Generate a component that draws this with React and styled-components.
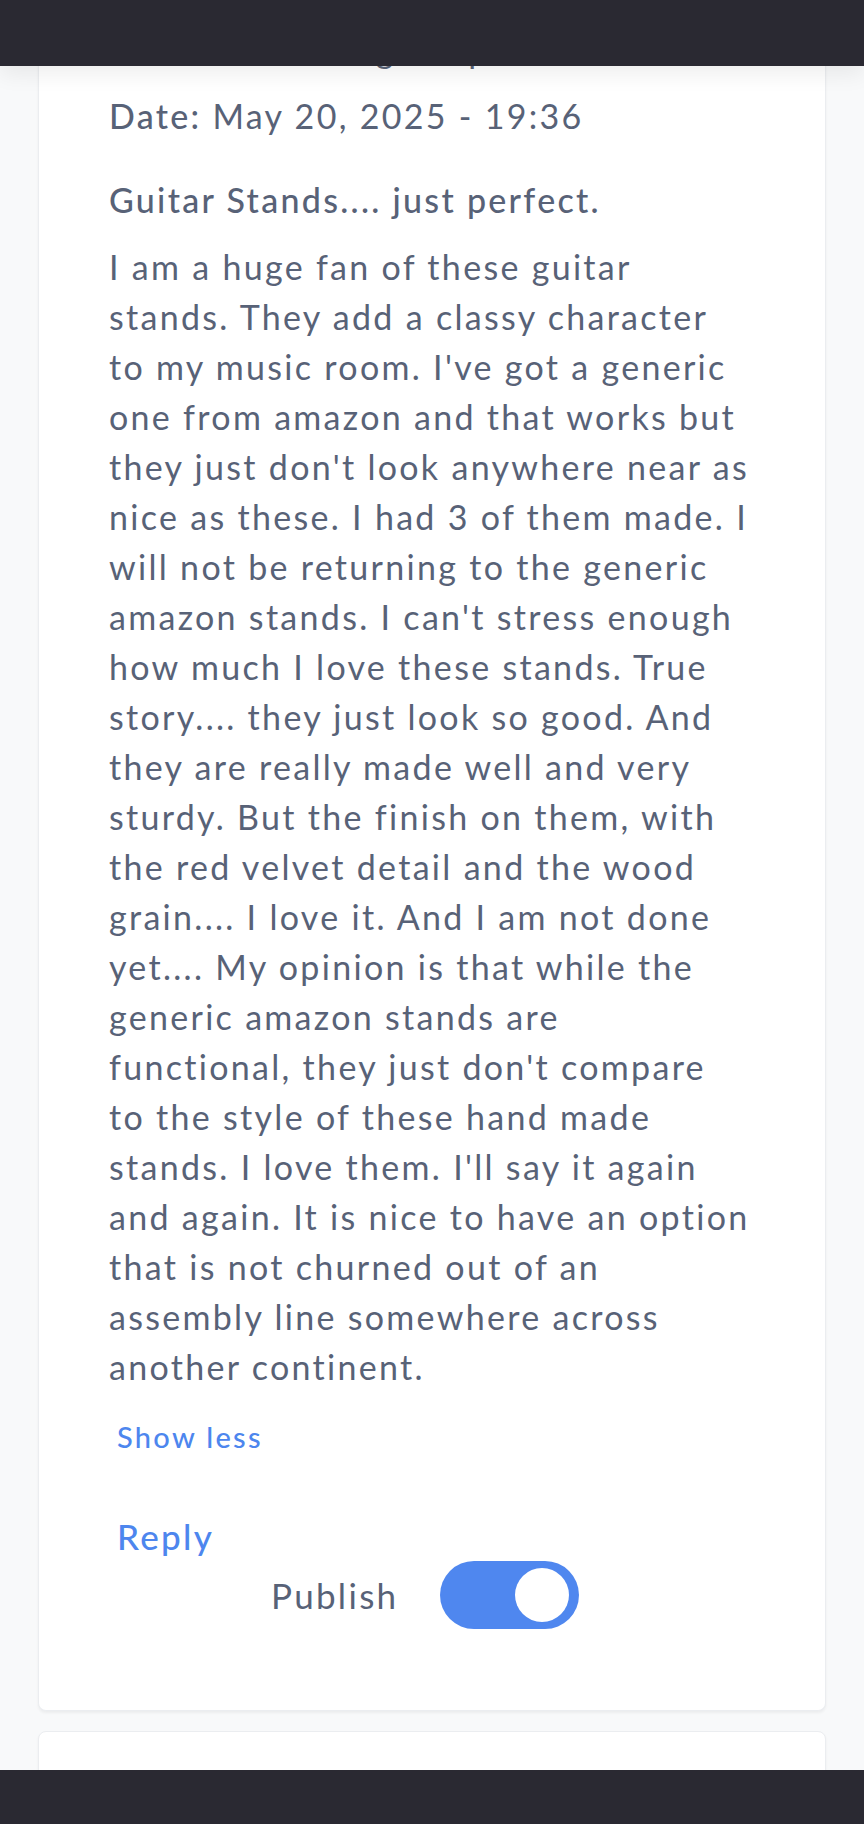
import React from 'react';
import styled, { createGlobalStyle } from 'styled-components';

const GlobalStyle = createGlobalStyle`
  html, body {
    margin: 0;
    padding: 0;
    background: #f8f9fa;
    font-family: 'Lato', 'Noto Sans', sans-serif;
  }
`;

const TopBar = styled.div`
  position: fixed;
  top: 0;
  left: 0;
  right: 0;
  height: 66px;
  background: #2a2932;
  box-shadow: 0 8px 22px rgba(0, 0, 0, 0.07);
  z-index: 10;
`;

const BottomBar = styled.div`
  position: fixed;
  bottom: 0;
  left: 0;
  right: 0;
  height: 54px;
  background: #2a2932;
  z-index: 10;
`;

const Page = styled.div`
  display: flex;
  flex-direction: column;
  gap: 20px;
  padding: 0 38px;
  height: 1824px;
  overflow: hidden;
`;

const Card = styled.div`
  background: #ffffff;
  border: 1px solid #ebedf0;
  border-top: none;
  border-radius: 0 0 8px 8px;
  box-shadow: 0 2px 3px rgba(0, 0, 0, 0.05);
  padding: 25px 40px 81px 70px;
  flex: ${p => (p.grow ? 1 : 'none')};
  letter-spacing: 2.3px;
  ${p => p.next && 'border-top: 1px solid #ebedf0; border-radius: 8px 8px 0 0;'}
`;

const Line = styled.div`
  font-size: 34px;
  line-height: 50px;
  color: #586277;
  margin-top: ${p => p.mt || 0}px;
  font-weight: ${p => p.weight || 400};
  white-space: nowrap;
`;

const Label = styled.span`
  font-weight: 500;
`;

const Body = styled.div`
  font-size: 34px;
  line-height: 50px;
  color: #586277;
  margin-top: 17px;
  white-space: pre;
`;

const LinkButton = styled.button`
  display: block;
  border: none;
  background: none;
  padding: 0;
  margin: ${p => p.mt}px 0 0 8px;
  font-family: inherit;
  letter-spacing: inherit;
  font-size: ${p => p.size}px;
  line-height: ${p => p.lh}px;
  font-weight: 500;
  color: #4d86ee;
  cursor: pointer;
`;

const PublishRow = styled.div`
  display: flex;
  align-items: center;
  gap: 42px;
  padding-left: 162px;
  height: 68px;
`;

const PublishLabel = styled.span`
  font-size: 35px;
  color: #586277;
`;

const Toggle = styled.div`
  width: 139px;
  height: 68px;
  border-radius: 34px;
  background: #4f87ef;
  position: relative;
`;

const Knob = styled.div`
  position: absolute;
  top: 7px;
  right: 10px;
  width: 54px;
  height: 54px;
  border-radius: 50%;
  background: #ffffff;
`;

const review = `I am a huge fan of these guitar
stands. They add a classy character
to my music room. I've got a generic
one from amazon and that works but
they just don't look anywhere near as
nice as these. I had 3 of them made. I
will not be returning to the generic
amazon stands. I can't stress enough
how much I love these stands. True
story.... they just look so good. And
they are really made well and very
sturdy. But the finish on them, with
the red velvet detail and the wood
grain.... I love it. And I am not done
yet.... My opinion is that while the
generic amazon stands are
functional, they just don't compare
to the style of these hand made
stands. I love them. I'll say it again
and again. It is nice to have an option
that is not churned out of an
assembly line somewhere across
another continent.`;

export default function App() {
  return (
    <>
      <GlobalStyle />
      <TopBar />
      <Page>
        <Card>
          <Line>Submitted: Doug Harp</Line>
          <Line mt={16}>
            <Label>Date:</Label> May 20, 2025 - 19:36
          </Line>
          <Line mt={34} weight={500}>Guitar Stands.... just perfect.</Line>
          <Body>{review}</Body>
          <LinkButton mt={25} size={29} lh={40}>Show less</LinkButton>
          <LinkButton mt={54} size={35} lh={50}>Reply</LinkButton>
          <PublishRow>
            <PublishLabel>Publish</PublishLabel>
            <Toggle>
              <Knob />
            </Toggle>
          </PublishRow>
        </Card>
        <Card next grow />
      </Page>
      <BottomBar />
    </>
  );
}
